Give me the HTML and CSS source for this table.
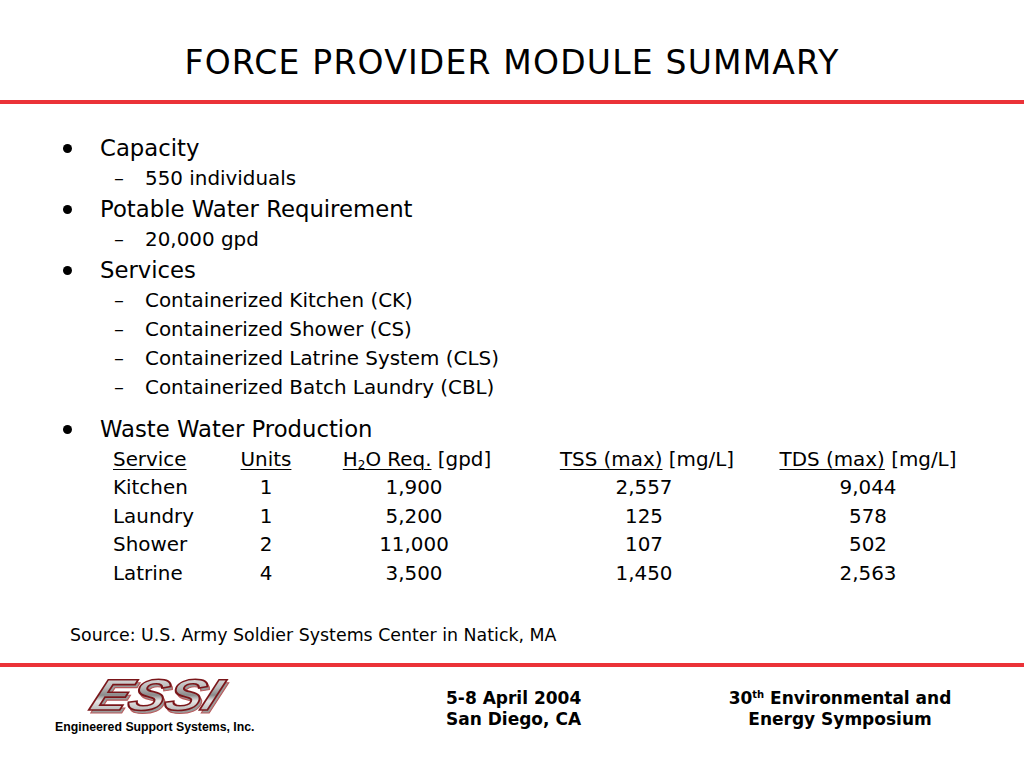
FILE: index.html
```html
<!DOCTYPE html>
<html>
<head>
<meta charset="utf-8">
<link rel="stylesheet" href="styles.css">
</head>
<body>
<div class="slide">
  <h1 class="title">FORCE PROVIDER MODULE SUMMARY</h1>
  <div class="rule"></div>
  <div class="content">
    <ul class="l1">
      <li>
        <div class="item"><span class="bullet"><i></i></span><span>Capacity</span></div>
        <ul class="l2">
          <li class="sub"><span class="dash">–</span><span>550 individuals</span></li>
        </ul>
      </li>
      <li>
        <div class="item"><span class="bullet"><i></i></span><span>Potable Water Requirement</span></div>
        <ul class="l2">
          <li class="sub"><span class="dash">–</span><span>20,000 gpd</span></li>
        </ul>
      </li>
      <li>
        <div class="item"><span class="bullet"><i></i></span><span>Services</span></div>
        <ul class="l2">
          <li class="sub"><span class="dash">–</span><span>Containerized Kitchen (CK)</span></li>
          <li class="sub"><span class="dash">–</span><span>Containerized Shower (CS)</span></li>
          <li class="sub"><span class="dash">–</span><span>Containerized Latrine System (CLS)</span></li>
          <li class="sub"><span class="dash">–</span><span>Containerized Batch Laundry (CBL)</span></li>
        </ul>
      </li>
      <li class="waste">
        <div class="item"><span class="bullet"><i></i></span><span>Waste Water Production</span></div>
        <div class="table">
          <div class="cell left"><u>Service</u></div>
          <div class="cell"><u>Units</u></div>
          <div class="cell"><u>H<sub>2</sub>O Req.</u> [gpd]</div>
          <div class="cell"><u>TSS (max)</u> [mg/L]</div>
          <div class="cell"><u>TDS (max)</u> [mg/L]</div>

          <div class="cell left">Kitchen</div>
          <div class="cell">1</div>
          <div class="cell num">1,900</div>
          <div class="cell num">2,557</div>
          <div class="cell">9,044</div>

          <div class="cell left">Laundry</div>
          <div class="cell">1</div>
          <div class="cell num">5,200</div>
          <div class="cell num">125</div>
          <div class="cell">578</div>

          <div class="cell left">Shower</div>
          <div class="cell">2</div>
          <div class="cell num">11,000</div>
          <div class="cell num">107</div>
          <div class="cell">502</div>

          <div class="cell left">Latrine</div>
          <div class="cell">4</div>
          <div class="cell num">3,500</div>
          <div class="cell num">1,450</div>
          <div class="cell">2,563</div>
        </div>
      </li>
    </ul>
    <p class="source">Source: U.S. Army Soldier Systems Center in Natick, MA</p>
  </div>
  <div class="rule"></div>
  <div class="footer">
    <div class="logo">
      <svg class="logo-mark" width="200" height="45" viewBox="0 0 200 45">
        <defs>
          <linearGradient id="chrome" x1="0" y1="0" x2="0" y2="1">
            <stop offset="0" stop-color="#f4f4f4"/>
            <stop offset="0.35" stop-color="#b8b8b8"/>
            <stop offset="0.5" stop-color="#8a8a8a"/>
            <stop offset="0.62" stop-color="#e6e6e6"/>
            <stop offset="1" stop-color="#8c8c8c"/>
          </linearGradient>
        </defs>
        <g transform="skewX(-22)">
          <text x="50" y="38" class="essi-shadow" textLength="126" lengthAdjust="spacingAndGlyphs">ESSI</text>
          <text x="47" y="35" class="essi" textLength="126" lengthAdjust="spacingAndGlyphs">ESSI</text>
        </g>
      </svg>
      <div class="company">Engineered Support Systems, Inc.</div>
    </div>
    <div class="ftext">5-8 April 2004<br>San Diego, CA</div>
    <div class="ftext center">30<sup>th</sup> Environmental and<br>Energy Symposium</div>
  </div>
</div>
</body>
</html>
```

FILE: styles.css
```css
html, body {
  margin: 0;
  padding: 0;
}
body {
  width: 1024px;
  height: 768px;
  overflow: hidden;
  background: #ffffff;
  color: #000000;
  font-family: "DejaVu Sans", Verdana, sans-serif;
}
.slide {
  display: flex;
  flex-direction: column;
  height: 768px;
}
.title {
  box-sizing: border-box;
  height: 100px;
  margin: 0;
  padding-top: 43px;
  font-family: "DejaVu Sans", Verdana, sans-serif;
  font-weight: normal;
  font-size: 33px;
  letter-spacing: 1.2px;
  line-height: 40px;
  text-align: center;
  white-space: nowrap;
}
.rule {
  height: 4px;
  background: #eb3238;
  flex: none;
}
.content {
  box-sizing: border-box;
  height: 559px;
  padding-top: 29px;
}
.l1, .l2 {
  list-style: none;
  margin: 0;
  padding: 0;
}
.l1 > li + li {
  margin-top: 1.5px;
}
.l1 > li.waste {
  margin-top: 12.5px;
}
.item {
  display: flex;
  align-items: center;
  padding-left: 63px;
  font-size: 22.75px;
  line-height: 30px;
}
.bullet {
  width: 37px;
  display: flex;
  align-items: center;
}
.bullet i {
  display: block;
  width: 9px;
  height: 9px;
  border-radius: 50%;
  background: #000;
}
.l2 {
  padding-top: 0.5px;
}
.sub {
  display: flex;
  padding-left: 114px;
  font-size: 19.9px;
  line-height: 29px;
}
.dash {
  width: 31px;
}
.table {
  display: grid;
  grid-template-columns: 113px 80px 222px 238px 204px;
  margin-top: 1.75px;
  padding-left: 113px;
  font-size: 19.9px;
  line-height: 28.5px;
}
.cell {
  text-align: center;
  white-space: nowrap;
}
.cell.left {
  text-align: left;
}
.cell.num {
  padding-right: 6px;
}
.cell u {
  text-decoration-thickness: 1px;
  text-underline-offset: 3px;
}
.cell sub {
  font-size: 12px;
  line-height: 0;
  vertical-align: -3px;
}
.source {
  margin: 36.75px 0 0 70px;
  font-size: 17.4px;
  line-height: 20px;
}
.footer {
  display: grid;
  grid-template-columns: 446px 264px 260px;
  flex: 1;
}
.logo {
  padding-left: 55px;
  padding-top: 8px;
}
.logo-mark {
  display: block;
  overflow: visible;
}
.essi {
  font-family: "Liberation Sans", Arial, sans-serif;
  font-weight: bold;
  font-style: italic;
  font-size: 44px;
  fill: url(#chrome);
  stroke: #7a1519;
  stroke-width: 1.6px;
}
.essi-shadow {
  font-family: "Liberation Sans", Arial, sans-serif;
  font-weight: bold;
  font-style: italic;
  font-size: 44px;
  fill: #9b9b9b;
  stroke: #b85a5c;
  stroke-width: 1px;
}
.company {
  width: 200px;
  font-family: "Liberation Sans", Arial, sans-serif;
  font-weight: bold;
  font-size: 12.3px;
  line-height: 14px;
  white-space: nowrap;
}
.ftext {
  padding-top: 20.5px;
  font-weight: bold;
  font-size: 17px;
  line-height: 21px;
}
.ftext.center {
  text-align: center;
}
.ftext sup {
  font-size: 10px;
  line-height: 0;
  vertical-align: 6px;
}
```
